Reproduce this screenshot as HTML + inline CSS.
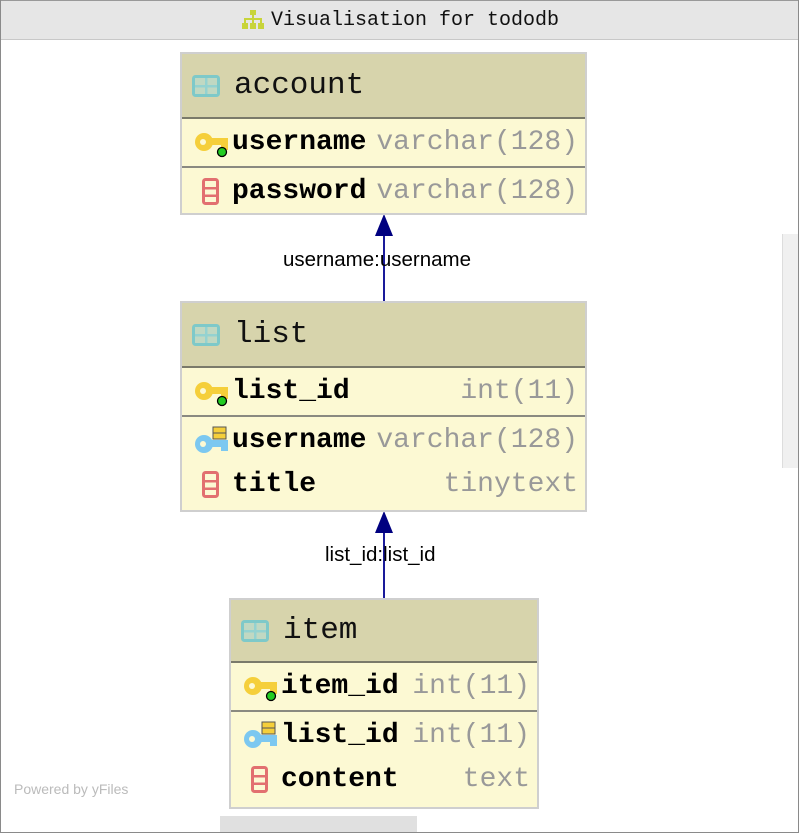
<!DOCTYPE html>
<html><head><meta charset="utf-8"><style>
*{margin:0;padding:0;box-sizing:border-box}
body{width:799px;height:833px;position:relative;background:#fff;overflow:hidden;font-family:"Liberation Mono","DejaVu Sans Mono",monospace}
.frame{position:absolute;left:0;top:0;width:799px;height:833px;border:1px solid #8a8a8a;border-top:none}
.title{position:absolute;left:1px;top:0;width:797px;height:40px;background:#e6e6e6;border-top:1px solid #999;border-bottom:1px solid #c8c8c8}
.title span{position:absolute;left:270px;top:8px;font-size:20px;color:#111;white-space:nowrap}
.tbl{position:absolute;background:#fcf9d3;border:2px solid #cfcfcf}
.hd{position:absolute;left:0;right:0;top:0;background:#d7d4ac;border-bottom:2px solid #7a7a6a}
.hd span{position:absolute;left:52px;font-size:31px;color:#111}
.row{position:absolute;left:0;right:0;height:48px}
.sep{border-top:2px solid #8a8a80}
.n{position:absolute;left:50px;top:8px;font-size:28px;font-weight:bold;color:#000;white-space:nowrap}
.t{position:absolute;right:7px;top:8px;font-size:28px;color:#999;white-space:nowrap}
.lbl{position:absolute;font-family:"Liberation Sans",sans-serif;font-size:20.5px;color:#000;white-space:nowrap}
svg{position:absolute}
</style></head><body>
<div class="frame"></div>
<div class="title"><svg style="left:240px;top:9px" width="24" height="20" viewBox="0 0 24 20"><g fill="#c8d43a"><rect x="9" y="0" width="6" height="5"/><rect x="11" y="5" width="2" height="4"/><rect x="3" y="8" width="18" height="2"/><rect x="3" y="8" width="2" height="5"/><rect x="11" y="8" width="2" height="5"/><rect x="19" y="8" width="2" height="5"/><rect x="1" y="13" width="6" height="6"/><rect x="9" y="13" width="6" height="6"/><rect x="17" y="13" width="6" height="6"/></g></svg><span>Visualisation for tododb</span></div>

<svg style="left:370px;top:214px" width="30" height="90"><line x1="14" y1="10" x2="14" y2="88" stroke="#1a1a9a" stroke-width="2"/><polygon points="14,0 5,22 23,22" fill="#000080"/></svg>
<div class="lbl" style="left:283px;top:248px">username:username</div>
<svg style="left:370px;top:511px" width="30" height="90"><line x1="14" y1="10" x2="14" y2="88" stroke="#1a1a9a" stroke-width="2"/><polygon points="14,0 5,22 23,22" fill="#000080"/></svg>
<div class="lbl" style="left:325px;top:543px">list_id:list_id</div>

<div class="tbl" style="left:180px;top:52px;width:407px;height:163px">
 <div class="hd" style="height:65px"><svg style="left:10px;top:21px" width="28" height="22"><rect x="1.5" y="1.5" width="25" height="19" rx="2" fill="none" stroke="#7ec9c9" stroke-width="3"/><rect x="1" y="10" width="26" height="2.5" fill="#7ec9c9"/><rect x="13" y="1" width="2.5" height="20" fill="#7ec9c9"/><rect x="3" y="3" width="22" height="16" fill="#a9dcd8" opacity=".5"/></svg><span style="top:14px">account</span></div>
 <div class="row" style="top:65px"><svg style="left:12px;top:12px" width="36" height="28"><circle cx="10" cy="11" r="9" fill="#f5cf3a"/><circle cx="9" cy="11" r="3" fill="#fcf9d3"/><rect x="15" y="7" width="19" height="7" fill="#f5cf3a"/><rect x="27" y="7" width="7" height="12" fill="#f5cf3a"/><circle cx="28" cy="21" r="4.5" fill="#22cc22" stroke="#000" stroke-width="1.3"/></svg><div class="n">username</div><div class="t">varchar(128)</div></div>
 <div class="row sep" style="top:112px"><svg style="left:20px;top:10px" width="18" height="28"><rect x="1.5" y="1.5" width="14" height="24" rx="2" fill="none" stroke="#e27070" stroke-width="3"/><rect x="1" y="9" width="15" height="2.5" fill="#e27070"/><rect x="1" y="16.5" width="15" height="2.5" fill="#e27070"/></svg><div class="n">password</div><div class="t">varchar(128)</div></div>
</div>

<div class="tbl" style="left:180px;top:301px;width:407px;height:211px">
 <div class="hd" style="height:65px"><svg style="left:10px;top:21px" width="28" height="22"><rect x="1.5" y="1.5" width="25" height="19" rx="2" fill="none" stroke="#7ec9c9" stroke-width="3"/><rect x="1" y="10" width="26" height="2.5" fill="#7ec9c9"/><rect x="13" y="1" width="2.5" height="20" fill="#7ec9c9"/><rect x="3" y="3" width="22" height="16" fill="#a9dcd8" opacity=".5"/></svg><span style="top:14px">list</span></div>
 <div class="row" style="top:65px"><svg style="left:12px;top:12px" width="36" height="28"><circle cx="10" cy="11" r="9" fill="#f5cf3a"/><circle cx="9" cy="11" r="3" fill="#fcf9d3"/><rect x="15" y="7" width="19" height="7" fill="#f5cf3a"/><rect x="27" y="7" width="7" height="12" fill="#f5cf3a"/><circle cx="28" cy="21" r="4.5" fill="#22cc22" stroke="#000" stroke-width="1.3"/></svg><div class="n">list_id</div><div class="t">int(11)</div></div>
 <div class="row sep" style="top:112px"><svg style="left:12px;top:8px" width="36" height="30"><circle cx="10" cy="19" r="9" fill="#7cc8f0"/><circle cx="9" cy="19" r="3" fill="#fcf9d3"/><rect x="15" y="15" width="19" height="7" fill="#7cc8f0"/><rect x="27" y="15" width="7" height="11" fill="#7cc8f0"/><rect x="19" y="2" width="13" height="6" fill="#f5cf3a" stroke="#555" stroke-width="1"/><rect x="19" y="8" width="13" height="6" fill="#f5cf3a" stroke="#555" stroke-width="1"/></svg><div class="n">username</div><div class="t">varchar(128)</div></div>
 <div class="row" style="top:158px"><svg style="left:20px;top:10px" width="18" height="28"><rect x="1.5" y="1.5" width="14" height="24" rx="2" fill="none" stroke="#e27070" stroke-width="3"/><rect x="1" y="9" width="15" height="2.5" fill="#e27070"/><rect x="1" y="16.5" width="15" height="2.5" fill="#e27070"/></svg><div class="n">title</div><div class="t">tinytext</div></div>
</div>

<div class="tbl" style="left:229px;top:598px;width:310px;height:211px">
 <div class="hd" style="height:63px"><svg style="left:10px;top:20px" width="28" height="22"><rect x="1.5" y="1.5" width="25" height="19" rx="2" fill="none" stroke="#7ec9c9" stroke-width="3"/><rect x="1" y="10" width="26" height="2.5" fill="#7ec9c9"/><rect x="13" y="1" width="2.5" height="20" fill="#7ec9c9"/><rect x="3" y="3" width="22" height="16" fill="#a9dcd8" opacity=".5"/></svg><span style="top:13px">item</span></div>
 <div class="row" style="top:63px"><svg style="left:12px;top:12px" width="36" height="28"><circle cx="10" cy="11" r="9" fill="#f5cf3a"/><circle cx="9" cy="11" r="3" fill="#fcf9d3"/><rect x="15" y="7" width="19" height="7" fill="#f5cf3a"/><rect x="27" y="7" width="7" height="12" fill="#f5cf3a"/><circle cx="28" cy="21" r="4.5" fill="#22cc22" stroke="#000" stroke-width="1.3"/></svg><div class="n">item_id</div><div class="t">int(11)</div></div>
 <div class="row sep" style="top:110px"><svg style="left:12px;top:8px" width="36" height="30"><circle cx="10" cy="19" r="9" fill="#7cc8f0"/><circle cx="9" cy="19" r="3" fill="#fcf9d3"/><rect x="15" y="15" width="19" height="7" fill="#7cc8f0"/><rect x="27" y="15" width="7" height="11" fill="#7cc8f0"/><rect x="19" y="2" width="13" height="6" fill="#f5cf3a" stroke="#555" stroke-width="1"/><rect x="19" y="8" width="13" height="6" fill="#f5cf3a" stroke="#555" stroke-width="1"/></svg><div class="n">list_id</div><div class="t">int(11)</div></div>
 <div class="row" style="top:156px"><svg style="left:20px;top:10px" width="18" height="28"><rect x="1.5" y="1.5" width="14" height="24" rx="2" fill="none" stroke="#e27070" stroke-width="3"/><rect x="1" y="9" width="15" height="2.5" fill="#e27070"/><rect x="1" y="16.5" width="15" height="2.5" fill="#e27070"/></svg><div class="n">content</div><div class="t">text</div></div>
</div>

<div class="lbl" style="left:14px;top:781px;font-size:14px;color:#bbb">Powered by yFiles</div>
<div style="position:absolute;left:782px;top:234px;width:16px;height:234px;background:#f0f0f0;border-left:1px solid #ddd"></div>
<div style="position:absolute;left:220px;top:816px;width:197px;height:16px;background:#e0e0e0"></div>
</body></html>
